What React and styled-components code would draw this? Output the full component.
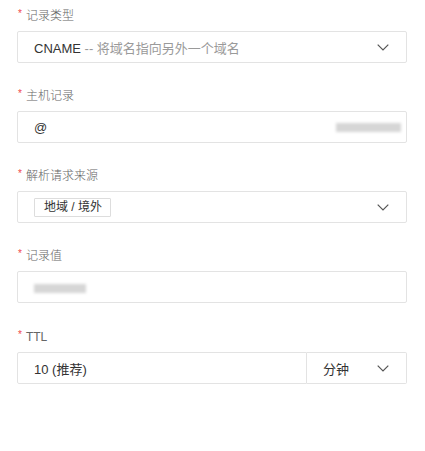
import React from "react";
import styled, { createGlobalStyle } from "styled-components";

const GlobalStyle = createGlobalStyle`
  html, body {
    margin: 0;
    padding: 0;
    background: #fff;
  }
  body {
    font-family: "Liberation Sans", "Noto Sans CJK SC", sans-serif;
    color: #333;
  }
`;

const Form = styled.div`
  width: 390px;
  padding: 6px 0 0 17px;
  display: flex;
  flex-direction: column;
`;

const Field = styled.div`
  display: flex;
  flex-direction: column;
  margin-bottom: ${(p) => (p.$last ? 0 : 23)}px;
  margin-top: ${(p) => (p.$last ? 1 : 0)}px;
`;

const Label = styled.div`
  height: 20px;
  line-height: 20px;
  font-size: 12px;
  font-weight: 300;
  color: #666;
  margin-bottom: 5px;
  margin-left: 1px;
  display: flex;
  align-items: center;
`;

const Star = styled.span`
  color: #f0474a;
  font-size: 10px;
  margin-right: 4px;
  position: relative;
  top: -2px;
`;

const Box = styled.div`
  box-sizing: border-box;
  height: 32px;
  border: 1px solid #e3e3e3;
  border-radius: 2px;
  display: flex;
  align-items: center;
  padding: 0 17px 0 16px;
  font-size: 13px;
  color: #333;
  background: #fff;
  flex: ${(p) => (p.$grow ? 1 : "none")};
  width: ${(p) => (p.$width ? `${p.$width}px` : "auto")};
`;

const Value = styled.span`
  flex: 1;
  white-space: nowrap;
`;

const Hint = styled.span`
  color: #9a9a9a;
`;

const Tag = styled.span`
  box-sizing: border-box;
  height: 19px;
  line-height: 17px;
  padding: 0 8px 0 9px;
  border: 1px solid #ddd;
  border-radius: 1px;
  font-size: 12px;
  color: #333;
  margin-right: auto;
`;

const Blurred = styled.span`
  display: inline-block;
  width: ${(p) => p.$w}px;
  height: 9px;
  background: #d6d6d6;
  filter: blur(1.5px);
  margin-top: ${(p) => p.$mt || 0}px;
`;

const Joined = styled.div`
  display: flex;
`;

const Chevron = () => (
  <svg width="12" height="7" viewBox="0 0 12 7" fill="none">
    <polyline points="0.7,0.7 6,6 11.3,0.7" stroke="#555" strokeWidth="1.2" />
  </svg>
);

export default function App() {
  return (
    <>
      <GlobalStyle />
      <Form>
        <Field>
          <Label>
            <Star>*</Star>记录类型
          </Label>
          <Box>
            <Value>
              CNAME <Hint>-- 将域名指向另外一个域名</Hint>
            </Value>
            <Chevron />
          </Box>
        </Field>

        <Field>
          <Label>
            <Star>*</Star>主机记录
          </Label>
          <Box style={{ paddingRight: 5 }}>
            <Value>@</Value>
            <Blurred $w={65} />
          </Box>
        </Field>

        <Field>
          <Label>
            <Star>*</Star>解析请求来源
          </Label>
          <Box>
            <Tag>地域 / 境外</Tag>
            <Chevron />
          </Box>
        </Field>

        <Field>
          <Label>
            <Star>*</Star>记录值
          </Label>
          <Box>
            <Blurred $w={52} $mt={2} />
          </Box>
        </Field>

        <Field $last>
          <Label>
            <Star>*</Star>TTL
          </Label>
          <Joined>
            <Box $grow style={{ borderRight: "1px solid #e3e3e3", borderRadius: "2px 0 0 2px" }}>
              <Value>10 (推荐)</Value>
            </Box>
            <Box $width={100} style={{ borderLeft: "none", borderRadius: "0 2px 2px 0" }}>
              <Value>分钟</Value>
              <Chevron />
            </Box>
          </Joined>
        </Field>
      </Form>
    </>
  );
}
